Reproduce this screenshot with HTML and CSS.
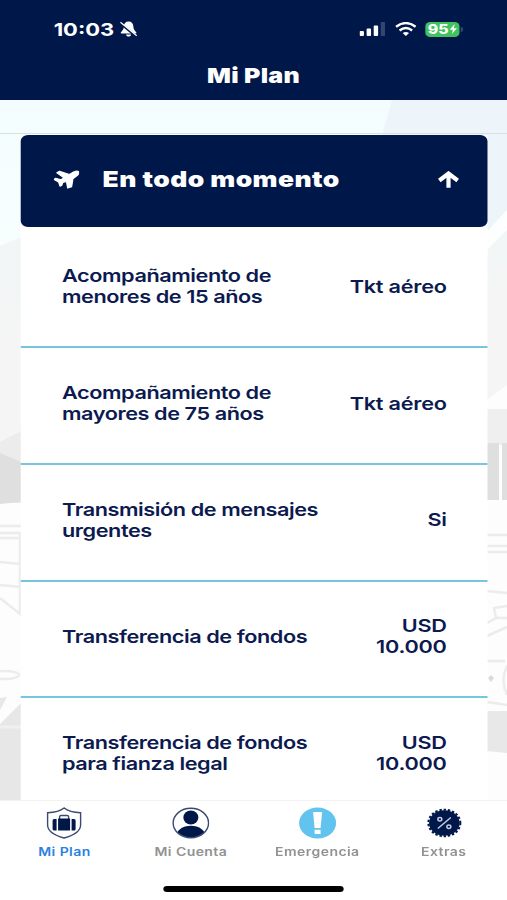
FILE: index.html
```html
<!DOCTYPE html>
<html lang="es">
<head>
    <meta charset="UTF-8">
    <meta name="viewport" content="width=device-width, initial-scale=1.0">
    <title>Mi Plan</title>
    <link rel="stylesheet" href="styles.css">
</head>
<body>
    <div class="app">
        <!-- faded landscape behind the content -->
        <svg class="backdrop" viewBox="0 0 507 900" preserveAspectRatio="none" aria-hidden="true">
            <defs>
                <linearGradient id="sky" x1="0" y1="0" x2="0" y2="1">
                    <stop offset="0" stop-color="#f3fdff"/>
                    <stop offset="1" stop-color="#f8fefe"/>
                </linearGradient>
                <linearGradient id="haze" x1="0" y1="0" x2="0" y2="1">
                    <stop offset="0" stop-color="#f1f6f7"/>
                    <stop offset="0.4" stop-color="#f5f5f5"/>
                </linearGradient>
            </defs>
            <rect width="507" height="900" fill="#fdfdfd"/>
            <rect y="100" width="507" height="150" fill="url(#sky)"/>
            <path d="M392 100H507V210L487 232V136H382Z" fill="#eef5fa"/>
            <path d="M507 210V260H487V232Z" fill="#fdfefe"/>
            <path d="M0 133.500H507" stroke="#d9e0e3" stroke-width="1"/>
            <path d="M0 246L21 237V503H0Z" fill="url(#haze)"/>
            <path d="M0 442L21 431V503H0Z" fill="#ececec"/>
            <path d="M0 453L21 462V502L0 504Z" fill="#dfdfdf"/>
            <path d="M507 230L487 250V400L507 385Z" fill="url(#haze)"/>
            <path d="M487 409H507V445H487Z" fill="#efefef"/>
            <path d="M487 443H499V500H487ZM502 443H507V500H502Z" fill="#dfdfdf"/>
            <g class="sketch" fill="none" stroke="#ececec" stroke-width="2.500">
                <path d="M0 526H21M0 533H21M0 538H21M0 562L21 564M0 585L21 587M0 598L20 614V533"/>
                <ellipse cx="5" cy="675" rx="14" ry="4"/>
                <path d="M487 535H507M487 546H507M487 552H507M487 591L507 593M487 623L496 618L494 608L507 606M496 618H507M487 636L507 627M487 661L505 661M507 666Q500 680 507 695M487 702L507 705"/>
            </g>
            <path d="M0 698L7 697L0 710ZM0 724L21 703V800H0Z" fill="#e7e7e7"/>
            <path d="M0 727H21" stroke="#f0f0f0" stroke-width="3"/>
            <path d="M491 675L494 678L491 682L488 678Z" fill="#dadada"/>
            <path d="M487 711H507V753L487 751Z" fill="#e8e8e8"/>
        </svg>

        <header class="header">
            <div class="status-bar">
                <div class="status-left">
                    <span class="clock">10:03</span>
                    <svg class="icon-bell" viewBox="0 0 18 16" preserveAspectRatio="none">
                        <path d="M9 .5c-3 0-4.600 2-4.700 5C4.200 8.500 3 9.600 1.500 11.200c-.5.600-.2 1.300.6 1.300h13.800c.8 0 1.100-.7.600-1.300C15 9.600 13.800 8.500 13.700 5.500 13.600 2.500 12 .5 9 .5ZM6.500 13.500c.3 2.700 4.700 2.700 5 0Z" fill="#fff"/>
                        <path d="M1 2.300L16.300 15.200" stroke="#00174a" stroke-width="2.400"/>
                        <path d="M1 1.200L17 14.700" stroke="#fff" stroke-width="1.200"/>
                    </svg>
                </div>
                <div class="status-right">
                    <svg class="icon-signal" viewBox="0 0 26 14" preserveAspectRatio="none">
                        <g fill="#fff">
                            <rect x="0" y="9" width="4.500" height="5" rx="1"/>
                            <rect x="7.200" y="6.500" width="4.500" height="7.500" rx="1"/>
                            <rect x="14.400" y="3.500" width="4.500" height="10.500" rx="1"/>
                        </g>
                        <rect x="21.500" y="0" width="4.500" height="14" rx="1" fill="#33466f"/>
                    </svg>
                    <svg class="icon-wifi" viewBox="0 0 22 14" preserveAspectRatio="none">
                        <path d="M1.200 4.800Q11-2.600 20.800 4.800M4.700 8.500Q11 3.600 17.300 8.500" fill="none" stroke="#fff" stroke-width="2.400"/>
                        <path d="M7.800 11Q11 8.800 14.200 11L11 14Z" fill="#fff"/>
                    </svg>
                    <div class="battery">
                        <span>95</span>
                        <svg class="icon-bolt" viewBox="0 0 7 10" preserveAspectRatio="none"><path d="M4.700 0L0 5.700H3L2 10L7 4.200H4Z" fill="#fff"/></svg>
                    </div>
                    <div class="battery-cap"></div>
                </div>
            </div>
            <h1 class="title">Mi Plan</h1>
        </header>

        <main class="content">
            <section class="card">
                <div class="card-header">
                    <svg class="icon-plane" viewBox="0 0 26 20" preserveAspectRatio="none">
                        <path d="M25.300 1.800C24 .6 20.500 1.500 18.500 3.200L16 4.800L6 1.300L3.300 3L10.500 8.200L7.500 10.200L2 8.700L.6 10L5 12.700L6.500 17L8.300 16L9.300 13.200L13 12L14.300 19L18.300 17.500L19.600 9.300L22.500 7C25 5 26.500 3 25.300 1.800Z" fill="#fff" stroke="#fff" stroke-width="1.200" stroke-linejoin="round"/>
                    </svg>
                    <h2 class="card-title">En todo momento</h2>
                    <svg class="icon-arrow" viewBox="0 0 22 17" preserveAspectRatio="none">
                        <path d="M11 16.800V3M1.800 9.500L11 2.500L20.200 9.500" fill="none" stroke="#fff" stroke-width="4.200"/>
                    </svg>
                </div>
                <ul class="benefits">
                    <li class="benefit">
                        <span class="benefit-name">Acompañamiento de<br>menores de 15 años</span>
                        <span class="benefit-value">Tkt aéreo</span>
                    </li>
                    <li class="benefit">
                        <span class="benefit-name">Acompañamiento de<br>mayores de 75 años</span>
                        <span class="benefit-value">Tkt aéreo</span>
                    </li>
                    <li class="benefit">
                        <span class="benefit-name">Transmisión de mensajes<br>urgentes</span>
                        <span class="benefit-value">Si</span>
                    </li>
                    <li class="benefit">
                        <span class="benefit-name">Transferencia de fondos</span>
                        <span class="benefit-value">USD<br>10.000</span>
                    </li>
                    <li class="benefit">
                        <span class="benefit-name">Transferencia de fondos<br>para fianza legal</span>
                        <span class="benefit-value">USD<br>10.000</span>
                    </li>
                </ul>
            </section>
        </main>

        <footer class="footer">
            <nav class="tabs">
                <a class="tab active">
                    <svg class="tab-icon" viewBox="0 0 38 32" preserveAspectRatio="none">
                        <path d="M19 1C15 4.200 8 5.500 2.500 5.700V18C2.500 24 10 28.500 19 31C28 28.500 35.500 24 35.500 18V5.700C30 5.500 23 4.200 19 1Z" fill="#fff" stroke="#3b4a70" stroke-width="1.400"/>
                        <path d="M14.500 12V9.500Q14.500 8.500 16 8.500H22Q23.500 8.500 23.500 9.500V12" fill="none" stroke="#3b4a70" stroke-width="1.400"/>
                        <path d="M13 11.500H25V23.500H13ZM11.500 12V23.500H9Q7.500 23.500 7.500 22V13.500Q7.500 12 9 12ZM26.500 12H29Q30.500 12 30.500 13.500V22Q30.500 23.500 29 23.500H26.500Z" fill="#00174a"/>
                    </svg>
                    <span>Mi Plan</span>
                </a>
                <a class="tab">
                    <svg class="tab-icon" viewBox="0 0 38 32" preserveAspectRatio="none">
                        <clipPath id="face"><ellipse cx="19" cy="16" rx="17.500" ry="14.500"/></clipPath>
                        <ellipse cx="19" cy="10.500" rx="7.500" ry="7" fill="#00174a"/>
                        <ellipse cx="19" cy="30" rx="15" ry="11.300" fill="#00174a" clip-path="url(#face)"/>
                        <ellipse cx="19" cy="16" rx="17.700" ry="14.700" fill="none" stroke="#3b4a70" stroke-width="1.400"/>
                    </svg>
                    <span>Mi Cuenta</span>
                </a>
                <a class="tab">
                    <svg class="tab-icon" viewBox="0 0 38 32" preserveAspectRatio="none">
                        <ellipse cx="19" cy="16" rx="18.500" ry="15.500" fill="#62c4ee"/>
                        <path d="M14.500 5H23.500L22 21H16ZM16 22.800H22V27H16Z" fill="#fff"/>
                    </svg>
                    <span>Emergencia</span>
                </a>
                <a class="tab">
                    <svg class="tab-icon" viewBox="0 0 38 32" preserveAspectRatio="none">
                        <ellipse cx="19" cy="16" rx="15.300" ry="12.700" fill="#00174a"/>
                        <ellipse cx="19" cy="16" rx="16" ry="13.300" fill="none" stroke="#00174a" stroke-width="2" stroke-dasharray="2.400 1.850"/>
                        <path d="M12.500 21.500L25.500 10.500" stroke="#c5cde0" stroke-width="1.500"/>
                        <ellipse cx="14.500" cy="12.300" rx="2" ry="1.700" fill="none" stroke="#c5cde0" stroke-width="1.500"/>
                        <ellipse cx="23.500" cy="19.700" rx="2" ry="1.700" fill="none" stroke="#c5cde0" stroke-width="1.500"/>
                    </svg>
                    <span>Extras</span>
                </a>
            </nav>
            <div class="home-indicator"></div>
        </footer>
    </div>
</body>
</html>
```

FILE: styles.css
```css
* {
    box-sizing: border-box;
}

body {
    margin: 0;
    overflow: hidden;
    font-family: Inter, "Liberation Sans", sans-serif;
    color: #0c1a50;
}

/* 416px layout stretched to the full 507px width */
.app {
    position: relative;
    display: flex;
    flex-direction: column;
    width: 416px;
    height: 900px;
    overflow: hidden;
    transform: scaleX(1.21875);
    transform-origin: 0 0;
}

.app > * {
    position: relative;
}

.app > .backdrop {
    position: absolute;
    top: 0;
    left: 0;
    width: 100%;
    height: 100%;
}

.sketch {
    filter: blur(0.6px);
}

.app svg {
    display: block;
    flex-shrink: 0;
}

.header {
    height: 100px;
    flex-shrink: 0;
    background-color: #00174a;
    color: #fff;
}

.status-bar {
    display: flex;
    justify-content: space-between;
    align-items: center;
    height: 58px;
    padding: 0 36.500px 0 44px;
}

.status-left,
.status-right {
    display: flex;
    align-items: center;
}

.clock {
    font-size: 18px;
    font-weight: 700;
}

.icon-bell {
    width: 15px;
    height: 16px;
    margin-left: 4px;
}

.icon-signal {
    width: 21px;
    height: 14px;
}

.icon-wifi {
    width: 18px;
    height: 14px;
    margin: 0 7px 0 8px;
}

.battery {
    display: flex;
    align-items: center;
    justify-content: center;
    width: 28px;
    height: 15px;
    border-radius: 4px;
    background-color: #3fc35c;
    font-size: 13px;
    font-weight: 800;
}

.battery-cap {
    width: 1.500px;
    height: 5px;
    margin-left: 1px;
    border-radius: 0 2px 2px 0;
    background-color: #33466f;
}

.icon-bolt {
    width: 6px;
    height: 10px;
    margin-left: 1px;
}

.title {
    margin: 5px 0 0;
    font-size: 20.500px;
    font-weight: 900;
    line-height: 26px;
    letter-spacing: 0.200px;
    text-align: center;
}

.content {
    flex: 1;
    min-height: 0;
    padding: 35px 16.500px 0 17.200px;
    overflow: hidden;
}

.card {
    background-color: #fff;
}

.card-header {
    display: flex;
    align-items: center;
    height: 92px;
    padding: 0 23px 4px 27px;
    border-radius: 6px;
    background-color: #00174a;
    color: #fff;
}

.icon-plane {
    width: 21px;
    height: 19px;
}

.card-title {
    flex: 1;
    margin: 0 0 0 19px;
    font-size: 21.700px;
    font-weight: 900;
    letter-spacing: 0.350px;
    white-space: nowrap;
}

.icon-arrow {
    width: 18px;
    height: 17px;
}

.benefits {
    margin: 0;
    padding: 4.500px 0 0;
    list-style: none;
}

.benefit {
    display: flex;
    align-items: center;
    justify-content: space-between;
    height: 116.700px;
    padding: 0 33px 5px 33.700px;
    border-bottom: 2px solid #77c6dd;
    font-size: 17.800px;
    font-weight: 600;
    line-height: 21px;
    letter-spacing: -0.350px;
}

.benefit-value {
    text-align: right;
    letter-spacing: -0.200px;
}

.footer {
    height: 100px;
    flex-shrink: 0;
    border-top: 1px solid #f2f2f2;
    background-color: #fff;
}

.tabs {
    display: flex;
    padding-left: 1px;
}

.tab {
    display: flex;
    flex: 1;
    flex-direction: column;
    align-items: center;
    height: 86px;
    padding-top: 6px;
    color: #929292;
    font-size: 11.500px;
    font-weight: 600;
    letter-spacing: 0.350px;
}

.tab.active {
    color: #2a82df;
}

.tab-icon {
    width: 31.200px;
    height: 32px;
    margin-bottom: 6px;
}

.home-indicator {
    width: 148px;
    height: 5.500px;
    margin: -1px auto 0;
    border-radius: 3px;
    background-color: #000;
}
```
